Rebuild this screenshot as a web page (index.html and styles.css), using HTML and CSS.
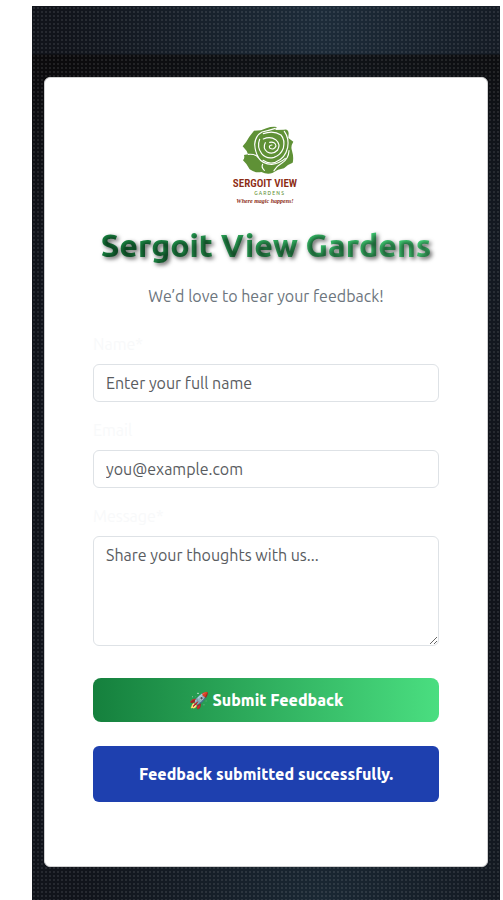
FILE: index.html
```html
<!DOCTYPE html>
<html lang="en">
<head>
<meta charset="utf-8">
<meta name="viewport" content="width=device-width, initial-scale=1">
<title>Sergoit View Gardens</title>
<link rel="stylesheet" href="styles.css">
</head>
<body>
<main class="backdrop">
  <section class="card">
    <svg class="logo" viewBox="0 0 80 80" role="img" aria-label="Sergoit View Gardens logo">
      <g transform="translate(-11 -12) scale(.3333)">
        <path fill="#5f9136" d="M117 50L138 49L154 43Q170 37 185 39L181 48L207 47Q220 44 221 58L220 72L235 83Q226 97 231 110Q237 130 233 146Q216 152 207 163Q189 165 172 177Q156 182 139 174Q120 178 104 166Q97 151 84 139Q90 133 87 123L99 121L95 111L83 97Q95 83 103 68Z"/>
        <g fill="none" stroke="#fff" stroke-width="3.5" stroke-linecap="round" stroke-linejoin="round">
          <path d="M181 43Q159 50 141 54Q121 65 119 91Q120 113 130 130"/>
          <path d="M145 59Q175 48 198 63Q211 78 205 103Q197 124 177 130Q154 136 140 119Q125 99 134 76"/>
          <path d="M145 75Q166 66 182 77Q198 91 188 108Q174 123 157 114Q142 102 151 86"/>
          <path d="M164 85Q181 82 183 96Q177 109 165 103Q159 95 171 93"/>
          <path d="M208 52Q223 73 218 100Q211 133 181 145Q161 151 144 139"/>
          <path d="M100 121Q121 119 130 131Q143 151 170 151Q193 149 211 133"/>
          <path d="M222 110Q221 134 200 148Q187 155 177 170M143 151Q138 160 148 169"/>
        </g>
      </g>
      <g text-anchor="middle">
        <text class="logo-name" x="39" y="61">SERGOIT VIEW</text>
        <text class="logo-sub" x="43" y="69">G A R D E N S</text>
        <text class="logo-tag" x="39" y="77">Where magic happens!</text>
      </g>
    </svg>
    <h1 class="title">Sergoit View Gardens</h1>
    <p class="intro">We’d love to hear your feedback!</p>
    <form class="form">
      <div class="field">
        <label for="name">Name*</label>
        <input id="name" type="text" placeholder="Enter your full name">
      </div>
      <div class="field">
        <label for="email">Email</label>
        <input id="email" type="email" placeholder="you@example.com">
      </div>
      <div class="field">
        <label for="message">Message*</label>
        <textarea id="message" placeholder="Share your thoughts with us..."></textarea>
      </div>
      <button class="submit" type="button">🚀 Submit Feedback</button>
    </form>
    <p class="notice" role="status">Feedback submitted successfully.</p>
  </section>
</main>
</body>
</html>
```
FILE: styles.css
```css
* { box-sizing: border-box; }

body {
  margin: 0;
  background: #fff;
  color: #212529;
  font: 400 16px/24px Ubuntu, "Noto Sans", sans-serif;
}

.backdrop {
  min-height: calc(100vh - 6px);
  margin: 6px 3px 0 32px;
  padding: 71px 12px 33px;
  background:
    conic-gradient(from 0deg at 2px 2px, transparent 75%, rgba(255, 255, 255, 0.09) 0) 1px 1px / 4px 4px,
    linear-gradient(transparent 48px, rgba(8, 5, 4, 0.65) 49px, rgba(8, 5, 4, 0.4) 110px, transparent 240px),
    radial-gradient(ellipse 260px 600px at 62% 0, #1d2c3a, transparent),
    radial-gradient(ellipse 240px 180px at 62% 100%, #1a2834, transparent),
    #11141b;
}

.card {
  padding: 48px;
  border: 1px solid #cfcfd0;
  border-radius: 6px;
  background: #fff;
  text-align: center;
}

.logo {
  display: block;
  width: 80px;
  height: 80px;
  margin: 0 auto 16px;
}

.logo-name { fill: #8c2c14; font: 600 11px "Roboto Condensed", Ubuntu, sans-serif; }
.logo-sub { fill: #5f9136; font: 500 5px Ubuntu, sans-serif; }
.logo-tag { fill: #8c2c14; font: italic bold 6px "Liberation Serif", serif; }

.title {
  margin: 0 0 16px;
  background: linear-gradient(to right, #15803d, #4ade80);
  background-clip: text;
  color: transparent;
  font-size: 32px;
  font-weight: 800;
  line-height: 46px;
  text-shadow: 2px 2px 4px rgba(0, 0, 0, 0.6);
}

.intro { margin: 0 0 24px; color: #6c757d; }
.form { text-align: left; }
.field { margin-bottom: 16px; }

label {
  display: block;
  margin-bottom: 8px;
  color: #f8f9fa;
}

input,
textarea {
  display: block;
  width: 100%;
  height: 38px;
  padding: 6px 12px;
  border: 1px solid #dee2e6;
  border-radius: 6px;
  background: #fff;
  color: #212529;
  font: inherit;
}

textarea { height: 110px; resize: vertical; }

::placeholder { color: #595c5f; opacity: 1; }

.submit {
  width: 100%;
  height: 44px;
  margin-top: 16px;
  padding: 0 12px;
  border: 0;
  border-radius: 8px;
  background: linear-gradient(to right, #15803d, #4ade80);
  color: #fff;
  font: inherit;
  font-weight: 800;
}

.notice {
  margin: 24px 0 16px;
  padding: 16px;
  border-radius: 6px;
  background: #1e40af;
  color: #fff;
  font-weight: 800;
}
```
